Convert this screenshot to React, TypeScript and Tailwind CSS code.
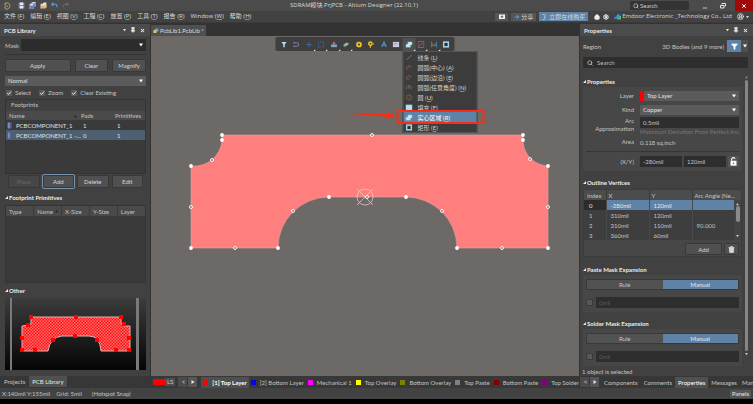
import React, { useState } from 'react';
import { ArrowRight, CircleUserRound, Filter, Home, Minus, Pin, Search, Settings, Trash2, X } from 'lucide-react';

const mainMenu = [
  ['文件', 'F'],
  ['编辑', 'E'],
  ['视图', 'V'],
  ['工程', 'C'],
  ['放置', 'P'],
  ['工具', 'T'],
  ['报告', 'R'],
  ['Window', 'W'],
  ['帮助', 'H'],
];

const placeMenu = [
  { icon: 'line', label: '线条', hotkey: 'L' },
  { icon: 'arcCenter', label: '圆弧(中心)', hotkey: 'A' },
  { icon: 'arcEdge', label: '圆弧(边沿)', hotkey: 'E' },
  { icon: 'arcAny', label: '圆弧(任意角度)', hotkey: 'N' },
  { icon: 'circle', label: '圆', hotkey: 'U' },
  { icon: 'fill', label: '填充', hotkey: 'F' },
  { icon: 'region', label: '实心区域', hotkey: 'R' },
  { icon: 'rect', label: '矩形', hotkey: 'E' },
];

const toolbar = [
  { icon: 'filter', more: false },
  { icon: 'snap', more: false },
  { icon: 'plus', more: true },
  { icon: 'marquee', more: true },
  { icon: 'align', more: true },
  { icon: 'body', more: true },
  { icon: 'pad', more: false },
  { icon: 'via', more: false },
  { icon: 'text', more: false },
  { icon: 'image', more: false },
  { icon: 'region', more: true },
  { icon: 'keepout', more: true },
  { icon: 'dimension', more: true },
  { icon: 'rect', more: false },
];

const layers = [
  { name: '[1] Top Layer', color: 'bg-[#ff0000]', active: true },
  { name: '[2] Bottom Layer', color: 'bg-[#0000ff]', active: false },
  { name: 'Mechanical 1', color: 'bg-[#ff00ff]', active: false },
  { name: 'Top Overlay', color: 'bg-[#ffff00]', active: false },
  { name: 'Bottom Overlay', color: 'bg-[#808000]', active: false },
  { name: 'Top Paste', color: 'bg-[#808080]', active: false },
  { name: 'Bottom Paste', color: 'bg-[#800000]', active: false },
  { name: 'Top Solder', color: 'bg-[#800080]', active: false },
];

const vertices = [
  ['0', '-280mil', '120mil', ''],
  ['1', '310mil', '120mil', ''],
  ['2', '310mil', '110mil', '90.000'],
  ['3', '360mil', '60mil', ''],
];

const glyphs: Record<string, React.ReactNode> = {
  line: <path d="M2 10 10 2" stroke="#4a8fd0" strokeWidth="1.6" />,
  arcCenter: (
    <>
      <path d="M2.5 9.5A4.3 4.3 0 1 1 10.3 6" stroke="#a8683a" strokeWidth="1.3" />
      <circle cx="6" cy="6.5" r="0.9" fill="#5a8fc4" />
    </>
  ),
  arcEdge: (
    <>
      <path d="M2.5 9.5A4.3 4.3 0 1 1 10.3 6" stroke="#a8683a" strokeWidth="1.3" />
      <path d="M4 10 6 7.5" stroke="#5a8fc4" strokeWidth="1.3" />
    </>
  ),
  arcAny: (
    <>
      <path d="M2.5 9.5A4.3 4.3 0 1 1 9.5 9" stroke="#a8683a" strokeWidth="1.3" />
      <path d="M6 4V8" stroke="#5a8fc4" strokeWidth="1.5" />
    </>
  ),
  circle: (
    <>
      <circle cx="6" cy="6" r="4.3" stroke="#a8683a" strokeWidth="1.2" />
      <circle cx="6" cy="6" r="0.8" fill="#a8683a" />
    </>
  ),
  fill: <rect x="0.5" y="1.5" width="11" height="9" fill="#b9e0ee" stroke="#6fa5bd" />,
  region: <path d="M4 1.5H11.5V6.5L8.5 7V10.5H0.5V6L4 5Z" fill="#c4e8f4" stroke="#8fc1d4" strokeWidth="0.6" />,
  rect: <rect x="2" y="2" width="8" height="8" stroke="#a9d3e6" strokeWidth="2.6" fill="#23303a" />,
  filter: <path d="M1.5 1.5H10.5L7.3 5.5V10.5H4.7V5.5Z" fill="#b5dff2" />,
  snap: (
    <>
      <path d="M2 3H7.5A2.7 2.7 0 0 1 7.5 9H2" stroke="#5f83ad" strokeWidth="1.8" />
      <path d="M1 3H4M1 9H4" stroke="#b86c6c" strokeWidth="1.8" />
    </>
  ),
  plus: <path d="M6 1V11M1 6H11" stroke="#46699a" strokeWidth="1.5" />,
  marquee: <rect x="1.5" y="1.5" width="9" height="9" stroke="#46689f" strokeWidth="1.4" strokeDasharray="2 1" />,
  align: (
    <>
      <rect x="1" y="6" width="10" height="4.5" fill="#7ba6d2" />
      <path d="M6 1V7M3.5 4H8.5" stroke="#d8705f" strokeWidth="1.8" />
    </>
  ),
  body: (
    <>
      <path d="M1 7 7 2.5 11.5 4.5 5.5 9.5Z" fill="#a5b1b4" />
      <path d="M1 7 5.5 9.5V11L1 8.8Z" fill="#5c8a6a" />
    </>
  ),
  pad: <circle cx="6" cy="6" r="3.4" stroke="#f0c424" strokeWidth="3" />,
  via: (
    <>
      <circle cx="5" cy="4.5" r="2.8" stroke="#f0c424" strokeWidth="2.6" />
      <path d="M5 7.5V11.5" stroke="#f0c424" strokeWidth="2" />
      <path d="M8 5H11.5M9.7 3.2V6.8" stroke="#7fb35a" strokeWidth="1.2" />
    </>
  ),
  text: <path d="M2 10.5 6 1.5 10 10.5M3.8 7.5H8.3" stroke="#4f90d0" strokeWidth="2" />,
  image: (
    <>
      <rect x="0.5" y="1.5" width="11" height="9" fill="#c9cede" />
      <path d="M2 4H10M2 6.5H7" stroke="#8990a8" strokeWidth="0.9" />
    </>
  ),
  keepout: (
    <>
      <rect x="1" y="1" width="10" height="10" stroke="#a25c86" strokeWidth="1.4" />
      <path d="M3 9 9 3" stroke="#b07a4a" strokeWidth="1.4" />
    </>
  ),
  dimension: (
    <>
      <path d="M1.5 1V11M10.5 1V11" stroke="#4a7fb8" strokeWidth="1.6" />
      <path d="M2 8H10M4 4V8M8 4V8" stroke="#a8784a" strokeWidth="1.4" />
    </>
  ),
};

const Glyph = ({ name, className }: { name: string; className: string }) => (
  <svg className={`${className} shrink-0`} viewBox="0 0 12 12" fill="none">
    {glyphs[name]}
  </svg>
);

const Caret = ({ className = 'w-1' }: { className?: string }) => (
  <svg className={`h-1 shrink-0 ${className}`} viewBox="0 0 8 8" fill="currentColor">
    <path d="M0 1H8L4 7Z" />
  </svg>
);

const Hotkey = ({ letter }: { letter: string }) => (
  <span>
    (<span className="underline decoration-white/40">{letter}</span>)
  </span>
);

const Button = ({ children, className = '', ...rest }: React.ButtonHTMLAttributes<HTMLButtonElement>) => (
  <button
    {...rest}
    className={`flex items-center justify-center rounded-[1px] border border-[#383838] bg-[#505050] text-[#d6d6d6] disabled:bg-[#464646] disabled:text-[#666] ${className}`}
  >
    {children}
  </button>
);

const Select = ({ id, label, value }: { id: string; label?: string; value: string }) => (
  <div className="relative flex-1 min-w-0">
    <select
      id={id}
      aria-label={label}
      className="block w-full h-[10px] appearance-none rounded-[1px] bg-[#5b5b5b] px-[3px] leading-[10px] text-[#e0e0e0]"
    >
      <option>{value}</option>
    </select>
    <Caret className="w-1 absolute right-[3px] top-[3px] text-white pointer-events-none" />
  </div>
);

const PanelHeader = ({ title }: { title: string }) => (
  <div className="flex items-center h-3 px-1 bg-[#4b4b4b] text-[#e8e8e8]">
    <h2 className="flex-1 font-bold">{title}</h2>
    <div className="flex items-center gap-1 pr-px">
      <button aria-label="Panel menu"><Caret className="w-[3px]" /></button>
      <button aria-label="Pin panel"><Pin className="w-1.5 h-1.5" strokeWidth={3} fill="currentColor" /></button>
      <button aria-label="Close panel"><X className="w-[5px] h-[5px]" strokeWidth={5} /></button>
    </div>
  </div>
);

const SectionTitle = ({ children }: { children: React.ReactNode }) => (
  <h3 className="flex items-center gap-px h-3 font-bold text-[#ececec]">
    <svg className="w-[3px] h-[3px]" viewBox="0 0 6 6" fill="currentColor">
      <path d="M6 0V6H0Z" />
    </svg>
    {children}
  </h3>
);

const CheckBox = ({ label, defaultChecked }: { label: string; defaultChecked?: boolean }) => (
  <label className="flex items-center gap-[3px]">
    <span className="relative w-1.5 h-1.5">
      <input type="checkbox" defaultChecked={defaultChecked} className="peer block w-1.5 h-1.5 appearance-none bg-[#5a5a5a]" />
      <svg className="absolute inset-0 hidden peer-checked:block pointer-events-none" viewBox="0 0 12 12" fill="none">
        <path d="M2.5 6 5 9 10 3" stroke="#f0f0f0" strokeWidth="1.8" />
      </svg>
    </span>
    {label}
  </label>
);

const PageArrows = () => (
  <div className="flex gap-px h-[10px] shrink-0 text-[#e8e8e8]">
    <button aria-label="Previous" className="w-[9px] flex items-center justify-center bg-[#4b4b4b] text-[#8a8a8a]">
      <Caret className="w-1 rotate-90" />
    </button>
    <button aria-label="Next" className="w-[9px] flex items-center justify-center bg-[#565656]">
      <Caret className="w-1 -rotate-90" />
    </button>
  </div>
);

const TitleBar = () => (
  <header className="flex items-center justify-between h-[11px] bg-[#4b4b4b]">
    <div className="flex flex-1 items-center gap-1 pl-[3px]">
      <svg className="w-2 h-2" viewBox="0 0 12 12" fill="none">
        <path d="M3 2C8 0 11 3 10 7S4 12 3 9 6 4 7 7M3 2V5" stroke="#c9a968" strokeWidth="1.5" />
      </svg>
      <button aria-label="Save" className="ml-[3px]">
        <svg className="block w-[7px] h-[7px]" viewBox="0 0 12 12">
          <path d="M1 1H11V11H1Z" fill="#6f7fb8" />
          <path d="M3 1H9V5H3ZM3 7H9V11H3Z" fill="#e6e9f4" />
        </svg>
      </button>
      <button aria-label="Save all">
        <svg className="block w-[7px] h-[7px]" viewBox="0 0 12 12">
          <path d="M4 0H12V8H4Z" fill="#8391c6" />
          <path d="M0 3H9V12H0Z" fill="#6f7fb8" />
          <path d="M2 3H7V6H2ZM6 0H10V2H6Z" fill="#e6e9f4" />
        </svg>
      </button>
      <button aria-label="Open">
        <svg className="block w-[7px] h-[7px]" viewBox="0 0 12 12">
          <path d="M1 3H5L6 1H11V10H1Z" fill="#e5e1d4" />
          <path d="M0 11 2.5 6H12L9.5 11Z" fill="#e0b768" />
        </svg>
      </button>
      <button aria-label="Undo">
        <svg className="block w-[7px] h-[7px]" viewBox="0 0 12 12" fill="none">
          <path d="M2 4H8Q11 5 10 9" stroke="#5ea0dc" strokeWidth="1.8" />
          <path d="M0 4 4 0V8Z" fill="#5ea0dc" />
        </svg>
      </button>
      <button aria-label="Redo">
        <svg className="block w-[7px] h-[7px]" viewBox="0 0 12 12" fill="none">
          <path d="M10 4H4Q1 5 2 9" stroke="#747474" strokeWidth="1.5" />
          <path d="M12 4 8 1V7Z" fill="#747474" />
        </svg>
      </button>
    </div>
    <h1 className="mr-12 leading-[11px] whitespace-nowrap text-[#d8d8d8] [font-family:'Open_Sans','Noto_Sans_CJK_SC',sans-serif]">
      SDRAM模块.PrjPCB - Altium Designer (22.10.1)
    </h1>
    <div className="flex flex-1 items-center justify-end h-full">
      <label className="flex items-center gap-px w-[59px] h-[9px] mr-2 px-[3px] bg-[#343434] rounded-[1px]">
        <Search className="w-[6px] h-[6px] shrink-0" strokeWidth={3} />
        <input aria-label="Search" placeholder="Search" className="w-full min-w-0 bg-transparent placeholder:text-[#d0d0d0]" />
      </label>
      <button aria-label="Minimize" className="w-4 flex justify-center pt-1">
        <Minus className="w-1.5 h-1.5" strokeWidth={4} />
      </button>
      <button aria-label="Restore" className="w-5 flex justify-center">
        <svg className="w-1.5 h-1.5" viewBox="0 0 12 12" fill="none" stroke="#e4e4e4" strokeWidth="2">
          <path d="M4 3V1H11V6H9M1 5H8V10H1Z" />
        </svg>
      </button>
      <button aria-label="Close" className="w-[18px] h-full flex items-center justify-center ml-[2px] bg-[#a30808] text-white">
        <X className="w-1.5 h-1.5" strokeWidth={4} />
      </button>
    </div>
  </header>
);

const MenuBar = () => (
  <nav className="flex items-center justify-between h-3 bg-[#424242] border-b border-[#3a3a3a] px-1 whitespace-nowrap [font-family:'Open_Sans','Noto_Sans_CJK_SC',sans-serif]">
    <div className="flex gap-[6px] text-[#dcdcdc]">
      {mainMenu.map(([label, key]) => (
        <button key={key}>
          {label} <Hotkey letter={key} />
        </button>
      ))}
    </div>
    <div className="flex items-center gap-[3px] text-[#d8d8d8]">
      <button aria-label="Notes" className="w-[13px] h-2 flex items-center justify-center bg-[#565656]">
        <svg className="w-1.5 h-1.5" viewBox="0 0 12 12">
          <path d="M0 1H12V10H0Z" fill="#f0f0f0" />
          <path d="M6 3V8M3.5 5.5H8.5" stroke="#444" strokeWidth="1.6" />
        </svg>
      </button>
      <button className="flex items-center gap-px h-2 px-[3px] bg-[#565656] leading-[8px]">
        <ArrowRight className="w-1.5 h-1.5 text-[#5aa5e6]" strokeWidth={4} />
        分享
      </button>
      <button className="flex items-center gap-[3px] h-[9px] px-[3px] bg-[#5f83a6] leading-[8px]">
        <svg className="w-1 h-1.5" viewBox="0 0 8 12" fill="none" stroke="#b8d2ea" strokeWidth="1.6">
          <path d="M1 1H5L7 4 4 6 7 9 4 11H1" />
        </svg>
        立即在线购买
      </button>
      <button aria-label="Home" className="ml-[3px]"><Home className="w-1.5 h-1.5" strokeWidth={3} fill="#f0f0f0" /></button>
      <button aria-label="Settings"><Settings className="w-1.5 h-1.5 text-white" strokeWidth={4} /></button>
      <a href="#company" className="flex items-center gap-px ml-[2px]">
        <svg className="w-[7px] h-[7px]" viewBox="0 0 12 12">
          <path d="M0 10Q0 6 4 6 5 1 9 2L12 10Z" fill="#3f8fe0" />
          <path d="M5 11 12 4V11Z" fill="#5fb95a" />
        </svg>
        Emdoor Electronic _Technology Co., Ltd
      </a>
      <button aria-label="Account" className="flex items-center gap-[2px] ml-[2px]">
        <CircleUserRound className="w-[7px] h-[7px]" strokeWidth={3} />
        <Caret className="w-[3px]" />
      </button>
    </div>
  </nav>
);

const shapePath =
  'M222 135H523V141A26 26 0 0 0 548 166V248H457A51 51 0 0 0 406 197H329A51 51 0 0 0 278 248H191V166A28 28 0 0 0 222 141Z';

const Preview = () => (
  <svg className="block w-full h-[72px]" viewBox="0 0 141 72" preserveAspectRatio="none">
    <defs>
      <linearGradient id="previewBg" x1="0" y1="0" x2="0" y2="1">
        <stop offset="0" stopColor="#3c3c3c" />
        <stop offset="1" stopColor="#050505" />
      </linearGradient>
      <pattern id="previewHatch" width="3" height="3" patternUnits="userSpaceOnUse">
        <rect width="3" height="3" fill="#ff1414" />
        <path d="M0 0H1.5V1.5H0ZM1.5 1.5H3V3H1.5Z" fill="#ff6a6a" />
      </pattern>
    </defs>
    <rect width="141" height="72" fill="url(#previewBg)" />
    <rect x="5" width="2" height="72" fill="#7a7a7a" />
    <rect x="131" width="3" height="72" fill="#7a7a7a" />
    <path
      d="M26 19H116V25L119 28H125V53H96Q95 38 84 38H57Q45 39 43 53H17V28L24 27 26 25Z"
      fill="url(#previewHatch)"
      stroke="#e6b0b0"
      strokeWidth="1"
    />
    {[[26, 19], [71, 19], [116, 19], [23, 27], [119, 26], [17, 40], [124, 40], [17, 52], [30, 52], [124, 52], [111, 52], [70, 38], [48, 42], [92, 42]].map(([x, y]) => (
      <rect key={`${x}-${y}`} x={x - 2} y={y - 2} width="4" height="4" fill="#ff0000" />
    ))}
  </svg>
);

const LibraryPanel = () => (
  <aside className="flex flex-col w-[151px] shrink-0 bg-[#414141] border-r border-[#333]">
    <PanelHeader title="PCB Library" />
    <div className="flex-1 pl-[5px] pr-1 pt-[3px]">
      <label className="relative flex items-center gap-[2px]">
        Mask
        <input className="flex-1 min-w-0 h-3 bg-[#2c2c2c] rounded-[1px]" />
        <Caret className="w-1 absolute right-[3px] text-white" />
      </label>
      <hr className="mt-[3px] border-[#353535]" />
      <div className="flex gap-1 mt-1">
        <Button className="flex-[2] h-[13px]">Apply</Button>
        <Button className="flex-1 h-[13px]">Clear</Button>
        <Button className="flex-1 h-[13px]">Magnify</Button>
      </div>
      <div className="flex mt-1">
        <Select id="mode" label="Mode" value="Normal" />
      </div>
      <div className="flex gap-2 h-[13px] pl-px">
        <CheckBox label="Select" defaultChecked />
        <CheckBox label="Zoom" defaultChecked />
        <CheckBox label="Clear Existing" defaultChecked />
      </div>
      <div className="h-[75px] bg-[#3a3a3a] border border-[#343434]">
        <div className="h-[11px] pl-[5px] bg-[#414141] leading-[10px]">Footprints</div>
        <table className="w-full table-fixed text-left">
          <thead>
            <tr className="h-[9px] bg-[#4a4a4a]">
              <th className="w-[75px] pl-[3px] font-normal">
                <span className="flex items-center justify-between pr-1">
                  Name <Caret className="w-[3px] rotate-180 text-[#222]" />
                </span>
              </th>
              <th className="w-[34px] font-normal">Pads</th>
              <th className="font-normal">Primitives</th>
            </tr>
          </thead>
          <tbody className="text-[#e0e0e0]">
            {[['PCBCOMPONENT_1', '1', '1'], ['PCBCOMPONENT_1 -...', '0', '1']].map(([name, pads, prims], i) => (
              <tr key={name} className={i === 1 ? 'h-[10px] bg-[#4d5f70]' : 'h-[10px]'}>
                <td className="pl-px whitespace-nowrap">
                  <span className="flex items-center gap-1">
                    <svg className="w-[5px] h-[7px] shrink-0" viewBox="0 0 8 12">
                      <path d="M0 1H8V11H0Z" fill="#4a5f94" />
                      <path d="M2 1H4V11H2Z" fill="#93a8d4" />
                    </svg>
                    {name}
                  </span>
                </td>
                <td className="pl-[2px]">{pads}</td>
                <td className="pl-[2px]">{prims}</td>
              </tr>
            ))}
          </tbody>
        </table>
      </div>
      <div className="flex gap-[3px] mt-px px-[3px]">
        <Button disabled className="flex-1 h-[13px]">Place</Button>
        <Button className="flex-1 h-[13px] outline outline-[#7893ad]">Add</Button>
        <Button className="flex-1 h-[13px]">Delete</Button>
        <Button className="flex-1 h-[13px]">Edit</Button>
      </div>
      <div className="mt-[3px]">
        <SectionTitle>Footprint Primitives</SectionTitle>
      </div>
      <div className="h-[78px] mt-[2px] bg-[#3a3a3a] border border-[#343434]">
        <table className="w-full table-fixed text-left">
          <thead>
            <tr className="h-[10px] bg-[#4a4a4a]">
              {['Type', 'Name', 'X-Size', 'Y-Size', 'Layer'].map((col) => (
                <th key={col} className="pl-[3px] font-normal whitespace-nowrap border-r border-[#3a3a3a] last:border-0">
                  <span className="flex items-center justify-between pr-[3px]">
                    {col}
                    {col === 'Name' && <Caret className="w-[3px] rotate-180 text-[#222]" />}
                  </span>
                </th>
              ))}
            </tr>
          </thead>
        </table>
      </div>
      <div className="mt-px">
        <SectionTitle>Other</SectionTitle>
      </div>
      <div className="mt-[2px]">
        <Preview />
      </div>
    </div>
    <div className="flex h-3 bg-[#373737]">
      <button className="px-[4px] h-[11px]">Projects</button>
      <button className="px-[3px] h-[11px] bg-[#505050] text-[#e6e6e6]">PCB Library</button>
    </div>
  </aside>
);

const Board = () => {
  const solid = [[222, 135], [222, 140], [523, 135], [523, 140], [191, 166], [548, 166], [191, 248], [278, 248], [457, 248], [548, 248], [329, 197], [406, 197]];
  const hollow = [[372, 135], [212, 160], [530, 159], [191, 207], [548, 207], [235, 248], [502, 248], [293, 211], [442, 211], [367, 197]];
  return (
    <svg className="block w-full h-full" viewBox="151 36 428 340">
      <path d={shapePath} fill="#ff7f7f" stroke="#e9a3a3" strokeWidth="0.6" />
      <g stroke="#f0d0d0" strokeWidth="0.7" fill="none">
        <circle cx="365" cy="197" r="8" />
        <path d="M357 189 373 205M373 189 357 205" />
      </g>
      {solid.map(([x, y]) => (
        <circle key={`${x}-${y}`} cx={x} cy={y} r="1.9" fill="#fff" />
      ))}
      {hollow.map(([x, y]) => (
        <circle key={`${x}-${y}`} cx={x} cy={y} r="1.5" fill="#9a7676" stroke="#fff" strokeWidth="0.9" />
      ))}
    </svg>
  );
};

const PlaceMenu = () => (
  <div className="absolute left-[127px] top-[14px] w-[75px] bg-[#3c3c3c] border border-[#555]">
    {placeMenu.map((item) => (
      <button
        key={item.label}
        className={`flex items-center gap-[5px] w-full h-[10px] pl-[2px] whitespace-nowrap ${item.icon === 'region' ? 'bg-[#5f83a6] text-white' : 'text-[#d4d4d4]'}`}
      >
        <Glyph name={item.icon} className="w-[7px] h-[7px]" />
        <span>
          {item.label} <Hotkey letter={item.hotkey} />
        </span>
      </button>
    ))}
    {/* callout around the solid region entry */}
    <div className="absolute -left-[7px] top-[58px] w-[88px] h-[14px] border-2 border-[#fb2c16] rounded-[2px] pointer-events-none" />
    <svg className="absolute -left-[56px] top-[59px] w-[48px] h-2 pointer-events-none" viewBox="0 0 48 8">
      <path d="M0 2 41 3V1L48 4.5 41 8V6L20 4Z" fill="#fb2c16" />
      <path d="M0 2.5 41 4.5" stroke="#fb2c16" strokeWidth="1" />
    </svg>
  </div>
);

const Editor = () => (
  <main className="flex flex-col flex-1 min-w-0">
    <div className="flex h-3 bg-[#333]">
      <button className="flex items-center gap-px px-[2px] mt-px bg-[#505050] text-[#dcdcdc]">
        <svg className="w-[6px] h-[7px]" viewBox="0 0 12 12">
          <path d="M4 2H11V8H4Z" fill="#5fa0d8" />
          <path d="M1 5H7V11H1Z" fill="#e6c64a" />
        </svg>
        PcbLib1.PcbLib *
      </button>
    </div>
    <div className="relative flex-1 min-h-0 bg-[#6c6967]">
      <Board />
      <div className="absolute left-1/2 top-px -translate-x-1/2 flex items-center w-[179px] h-[14px] px-[2px] bg-[#3f3f3f] rounded-[2px]">
        {toolbar.map((tool) => (
          <button
            key={tool.icon}
            aria-label={tool.icon}
            className={`relative flex flex-1 h-[13px] items-center justify-center ${tool.icon === 'region' ? 'bg-[#505050]' : ''}`}
          >
            <Glyph name={tool.icon} className="w-[7px] h-[7px]" />
            {tool.more && (
              <svg className="absolute right-0 bottom-0 w-[2px] h-[2px]" viewBox="0 0 4 4">
                <path d="M4 0V4H0Z" fill="#fff" />
              </svg>
            )}
          </button>
        ))}
        <PlaceMenu />
      </div>
    </div>
    <div className="flex items-center h-3 pl-[2px] bg-[#383838] whitespace-nowrap overflow-hidden">
      <span className="w-[12px] h-[6px] shrink-0 bg-[#ff0000]" />
      <button className="px-[2px] mr-[3px] bg-[#4f4f4f] leading-[8px]">LS</button>
      <PageArrows />
      <div className="flex flex-1 justify-between ml-1 mr-[3px]">
        {layers.map((layer) => (
          <button
            key={layer.name}
            className={`flex items-center gap-1 h-[11px] px-[2px] ${layer.active ? 'bg-[#4f4f4f] font-bold text-white' : ''}`}
          >
            <span className={`w-[5px] h-[5px] ${layer.color}`} />
            {layer.name}
          </button>
        ))}
      </div>
    </div>
  </main>
);

const Field = ({ label, htmlFor, children }: { label: string; htmlFor?: string; children: React.ReactNode }) => (
  <div className="flex items-center gap-[6px] min-h-[10px]">
    <label htmlFor={htmlFor} className="w-[48px] shrink-0 text-right leading-[8px]">{label}</label>
    {children}
  </div>
);

const MaskExpansion = ({ title }: { title: string }) => {
  const [mode, setMode] = useState('Manual');
  return (
    <section>
      <SectionTitle>{title}</SectionTitle>
      <div className="flex flex-col gap-[7px] h-[37px] px-[3px] py-1 bg-[#474747]">
        <div className="flex h-[11px] border border-[#393939]">
          {['Rule', 'Manual'].map((option) => (
            <button
              key={option}
              onClick={() => setMode(option)}
              className={`flex-1 leading-[9px] ${mode === option ? 'bg-[#5f83a6] text-[#e8e8e8]' : 'bg-[#525252]'}`}
            >
              {option}
            </button>
          ))}
        </div>
        <div className="flex items-center gap-[3px]">
          <input type="checkbox" aria-label={`Override ${title}`} className="w-[7px] h-[7px] appearance-none bg-[#575757] border border-[#3a3a3a]" />
          <input aria-label={title} disabled placeholder="0mil" className="flex-1 min-w-0 h-[11px] px-[3px] bg-[#2e2e2e] placeholder:text-[#5c5c5c]" />
        </div>
      </div>
    </section>
  );
};

const PropertiesPanel = () => (
  <aside className="flex flex-col w-[174px] shrink-0 bg-[#414141] border-l border-[#333]">
    <PanelHeader title="Properties" />
    <div className="pl-[3px] pr-[5px] pt-1">
      <div className="flex items-center h-3">
        <span className="flex-1">Region</span>
        <span className="mr-[3px]">3D Bodies (and 9 more)</span>
        <button aria-label="Filter" className="flex items-center justify-center w-[14px] h-3 bg-[#5f83a6] text-white">
          <Filter className="w-[7px] h-[7px]" fill="currentColor" />
        </button>
        <button aria-label="Filter options" className="flex items-center justify-center w-[7px] h-3 bg-[#4f4f4f] text-white">
          <Caret />
        </button>
      </div>
      <label className="flex items-center gap-1 h-[11px] mt-[5px] px-1 bg-[#2e2e2e] rounded-[1px]">
        <Search className="w-[6px] h-[6px]" strokeWidth={3} />
        <input aria-label="Search properties" placeholder="Search" className="flex-1 min-w-0 bg-transparent placeholder:text-[#bdbdbd]" />
      </label>
    </div>
    <div className="flex flex-1 min-h-0 gap-[3px] pl-[3px] pr-[5px] pt-[7px]">
      <div className="flex-1 min-w-0">
        <SectionTitle>Properties</SectionTitle>
        <div className="flex flex-col h-[84px] px-[3px] pt-1 bg-[#474747]">
          <Field label="Layer" htmlFor="layer">
            <div className="flex flex-1 min-w-0">
              <span className="w-[4px] bg-[#ff0000]" />
              <Select id="layer" value="Top Layer" />
            </div>
          </Field>
          <div className="mt-1">
            <Field label="Kind" htmlFor="kind">
              <Select id="kind" value="Copper" />
            </Field>
          </div>
          <div className="flex gap-[6px] mt-[2px]">
            <label htmlFor="arc" className="w-[48px] shrink-0 text-right leading-[8px]">Arc Approximation</label>
            <div className="flex-1 min-w-0">
              <input id="arc" defaultValue="0.5mil" className="block w-full h-[11px] px-[3px] bg-[#2e2e2e]" />
              <p className="leading-[8px] whitespace-nowrap text-[#777]">Maximum Deviation From Perfect Arc</p>
            </div>
          </div>
          <div className="mt-px">
            <Field label="Area"><span>0.118 sq.inch</span></Field>
          </div>
          <hr className="mt-1 mb-[4px] border-[#363636]" />
          <Field label="(X/Y)" htmlFor="posX">
            <div className="flex flex-1 min-w-0 gap-[2px]">
              <input id="posX" defaultValue="-280mil" className="flex-1 min-w-0 h-[11px] px-[3px] bg-[#2e2e2e]" />
              <input aria-label="Y" defaultValue="120mil" className="flex-1 min-w-0 h-[11px] px-[3px] bg-[#2e2e2e]" />
              <button aria-label="Lock" className="flex items-center justify-center w-[11px] h-[11px] bg-[#545454]">
                <svg className="w-[9px] h-[9px]" viewBox="0 0 12 12" fill="none">
                  <path d="M3.5 5V3A2.3 2.3 0 0 1 8 2.5" stroke="#fff" strokeWidth="1.5" />
                  <path d="M2 5H10V11.5H2Z" fill="#fff" />
                  <circle cx="6" cy="8.2" r="1" fill="#545454" />
                </svg>
              </button>
            </div>
          </Field>
        </div>

        <div className="mt-[5px]">
          <SectionTitle>Outline Vertices</SectionTitle>
        </div>
        <div className="mt-px h-[68px] bg-[#474747] border border-[#3c3c3c]">
          <div className="relative">
            <table className="w-full table-fixed text-left">
              <thead>
                <tr className="h-[10px] bg-[#4c4c4c]">
                  <th className="w-[22px] pl-[3px] font-normal">Index</th>
                  <th className="w-[43px] pl-[2px] font-normal border-l border-[#3a3a3a]">X</th>
                  <th className="w-[43px] pl-[2px] font-normal border-l border-[#3a3a3a]">Y</th>
                  <th className="pl-[2px] font-normal whitespace-nowrap border-l border-[#3a3a3a]">Arc Angle (Ne...</th>
                </tr>
              </thead>
              <tbody>
                {vertices.map(([index, x, y, angle], i) => (
                  <tr key={index} className={i === 0 ? 'h-[10px] bg-[#5f83a6] text-[#e8e8e8]' : 'h-[10px] bg-[#3e3e3e]'}>
                    <td className={i === 0 ? 'pl-[5px] bg-[#2c2c2c]' : 'pl-[5px]'}>{index}</td>
                    <td className="pl-[4px] border-l border-[#4a4a4a]">{x}</td>
                    <td className="pl-[4px] border-l border-[#4a4a4a]">{y}</td>
                    <td className="pl-[4px] border-l border-[#4a4a4a]">{angle}</td>
                  </tr>
                ))}
              </tbody>
            </table>
            <div className="absolute right-0 top-[10px] bottom-0 flex flex-col items-center justify-between w-[7px] py-[2px] bg-[#444]">
              <Caret className="w-[3px] rotate-180" />
              <span className="w-[4px] h-4 mb-3 rounded-full bg-[#8a8a8a]" />
              <Caret className="w-[3px]" />
            </div>
          </div>
          <div className="flex justify-end gap-[2px] pt-[3px] pr-[2px]">
            <Button className="w-[37px] h-3">Add</Button>
            <Button aria-label="Delete vertex" className="w-[15px] h-3">
              <Trash2 className="w-[7px] h-[7px]" strokeWidth={3} fill="#d6d6d6" />
            </Button>
          </div>
        </div>

        <div className="flex flex-col gap-[5px] mt-[6px]">
          <MaskExpansion title="Paste Mask Expansion" />
          <MaskExpansion title="Solder Mask Expansion" />
        </div>
      </div>
      <div className="flex flex-col items-center w-[3px] pb-3">
        <Caret className="w-[3px] rotate-180 text-[#888]" />
        <span className="flex-1 w-[3px] my-px rounded-full bg-[#858585]" />
        <Caret className="w-[3px]" />
      </div>
    </div>
    <div className="pl-[2px] leading-[8px]">1 object is selected</div>
    <div className="flex items-center h-3 bg-[#373737] whitespace-nowrap overflow-hidden">
      <PageArrows />
      <div className="flex flex-1 justify-between pl-[2px]">
        {['Components', 'Comments', 'Properties', 'Messages', 'Manuf'].map((tab) => (
          <button
            key={tab}
            className={`h-[11px] ${tab === 'Manuf' ? 'pl-[2px]' : 'px-[3px]'} ${tab === 'Properties' ? 'bg-[#505050] text-white' : ''}`}
          >
            {tab}
          </button>
        ))}
      </div>
    </div>
  </aside>
);

const App = () => {
  return (
    <div className="flex flex-col h-screen overflow-hidden bg-black pb-[5px] text-[6px] leading-[9px] text-[#c4c4c4] [font-family:'Lato','Noto_Sans_CJK_SC',sans-serif]">
      <TitleBar />
      <MenuBar />
      <div className="flex flex-1 min-h-0 pt-px bg-[#333]">
        <LibraryPanel />
        <Editor />
        <PropertiesPanel />
      </div>
      <footer className="flex items-center h-[11px] pl-[2px] pr-[2px] bg-[#424242]">
        <span>X:140mil Y:155mil</span>
        <span className="ml-[6px]">Grid: 5mil</span>
        <span className="ml-[10px] flex-1">(Hotspot Snap)</span>
        <button className="px-[2px] bg-[#555] leading-[8px] text-[#e6e6e6]">Panels</button>
      </footer>
    </div>
  );
};

export default App;
